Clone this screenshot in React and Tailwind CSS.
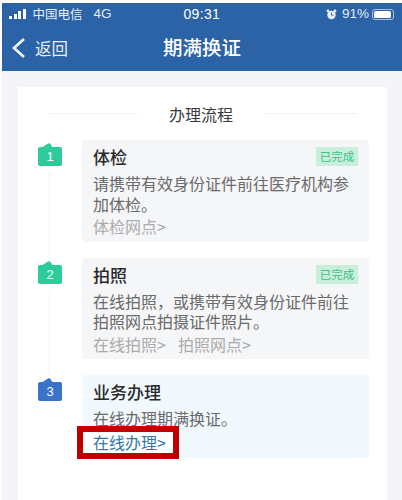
const font = { fontFamily: '"Noto Sans CJK SC", "Noto Sans", sans-serif' };

function Badge({ n, color }) {
  return (
    <div className="relative w-[24px] h-[19px] shrink-0 rounded-[2px] flex items-center justify-center text-[13px] text-white leading-none" style={{ backgroundColor: color }}>
      <svg className="absolute left-[2px] top-[-4px]" width="14" height="5" viewBox="0 0 14 5"><path d="M1 5 L8 0.5 Q9.5 0 10.5 1 L13 5 Z" fill={color} /></svg>
      <span className="font-['Liberation_Sans']">{n}</span>
    </div>
  );
}

function Done() {
  return <div className="absolute right-[11px] top-[7px] w-[42px] h-[19px] bg-[#c9efdb] text-[#3cc08d] text-[11.5px] leading-[19px] text-center">已完成</div>;
}

function Step({ n, color, title, lines, links, done, bg, h, last, lh }) {
  return (
    <div className="flex" style={{ height: h }}>
      <div className="w-[24px] ml-[20px] mr-[20px] flex flex-col pt-[7px]">
        <Badge n={n} color={color} />
        {!last && <div className="flex-1 ml-[11px] mt-[6px] border-l border-dotted border-[#e8ebef]" />}
      </div>
      <div className={`relative w-[287px] rounded-[3px] pl-[11px] pt-[3px] ${bg}`} style={{ height: h - 16 }}>
        <div className="text-[17px] leading-[28px] font-medium text-[#2a2a2a]">{title}</div>
        <div className="mt-[2px] text-[16px] text-[#6a6a6a]" style={{ lineHeight: lh + "px" }}>
          {lines.map((l) => <div key={l} className="whitespace-nowrap">{l}</div>)}
        </div>
        {links}
        {done && <Done />}
      </div>
    </div>
  );
}

export default function App() {
  return (
    <div className="w-[402px] h-[500px] overflow-hidden bg-white pl-[2px] pt-[3px]" style={font}>
      <div className="h-[68px] bg-[#2b63a6] text-white relative">
        <div className="flex items-center h-[22px] pl-[7px] pr-[8px] text-[12.5px] text-[#e4ecf5]">
          <div className="flex items-end gap-[1.5px] h-[10px] mr-[7px]">
            <span className="w-[3px] h-[3px] bg-white" />
            <span className="w-[3px] h-[5px] bg-white" />
            <span className="w-[3px] h-[8px] bg-white" />
            <span className="w-[3px] h-[10px] bg-white" />
          </div>
          <span>中国电信</span>
          <span className="ml-[11px] font-['Liberation_Sans'] text-[13.5px]">4G</span>
          <span className="ml-[72px] font-['Liberation_Sans'] text-[14px] font-medium tracking-[0.3px] text-white">09:31</span>
          <div className="ml-auto flex items-center">
            <svg width="11" height="11" viewBox="0 0 11 11"><circle cx="5.5" cy="6" r="4.2" fill="#e9eef5" /><circle cx="2" cy="2" r="1.4" fill="#e9eef5" /><circle cx="9" cy="2" r="1.4" fill="#e9eef5" /><path d="M5.5 3.5V6.2H7.5" stroke="#2b63a6" strokeWidth="0.9" fill="none" /></svg>
            <span className="ml-[5px] font-['Liberation_Sans'] text-[13.5px]">91%</span>
            <div className="ml-[3px] w-[22px] h-[11px] rounded-[3px] border border-[#a9bfdb] p-[1px]"><div className="w-[17px] h-full bg-white rounded-[1.5px]" /></div>
          </div>
        </div>
        <div className="relative flex items-center h-[46px] pl-[9px]">
          <svg width="16" height="22" viewBox="0 0 16 22" fill="none"><path d="M13 2 L3 11 L13 20" stroke="#f4f7fb" strokeWidth="2.6" /></svg>
          <span className="ml-[8px] text-[16.5px] text-[#e7edf5]">返回</span>
          <span className="absolute left-[161px] top-[8px] text-[19.5px] font-medium leading-[28px]">期满换证</span>
        </div>
      </div>
      <div className="bg-[#f3f5f9] pl-[16px] pr-[15px] pt-[16px] h-[430px]">
        <div className="relative bg-white h-[420px]">
          <div className="flex items-center h-[53px] pl-[32px] pr-[30px]">
            <div className="h-px w-[88px] bg-[#eef1f4]" />
            <div className="w-[128px] pr-[2px] text-center text-[16px] text-[#3a3a3a]">办理流程</div>
            <div className="h-px flex-1 bg-[#eef1f4]" />
          </div>
          <Step n="1" color="#2ecb9a" title="体检" bg="bg-[#f5f6f8]" h={118} done lh={21}
            lines={["请携带有效身份证件前往医疗机构参", "加体检。"]}
            links={<div className="text-[16px] leading-[22px] text-[#ababab]">体检网点&gt;</div>} />
          <Step n="2" color="#2ecb9a" title="拍照" bg="bg-[#f5f6f8]" h={117} done lh={20}
            lines={["在线拍照，或携带有效身份证件前往", "拍照网点拍摄证件照片。"]}
            links={<div className="text-[16px] leading-[22px] mt-[2px] text-[#ababab] flex gap-[12px]"><span>在线拍照&gt;</span><span>拍照网点&gt;</span></div>} />
          <Step n="3" color="#3a74c9" title="业务办理" bg="bg-[#f1f8fe]" h={99} last lh={21}
            lines={["在线办理期满换证。"]}
            links={
              <div className="absolute left-[-5px] top-[51px] w-[102px] h-[33px] border-[6px] border-[#c00000] bg-white pl-[10px] text-[16px] leading-[21px] text-[#3277a8]">在线办理&gt;</div>
            } />
        </div>
      </div>
    </div>
  );
}
